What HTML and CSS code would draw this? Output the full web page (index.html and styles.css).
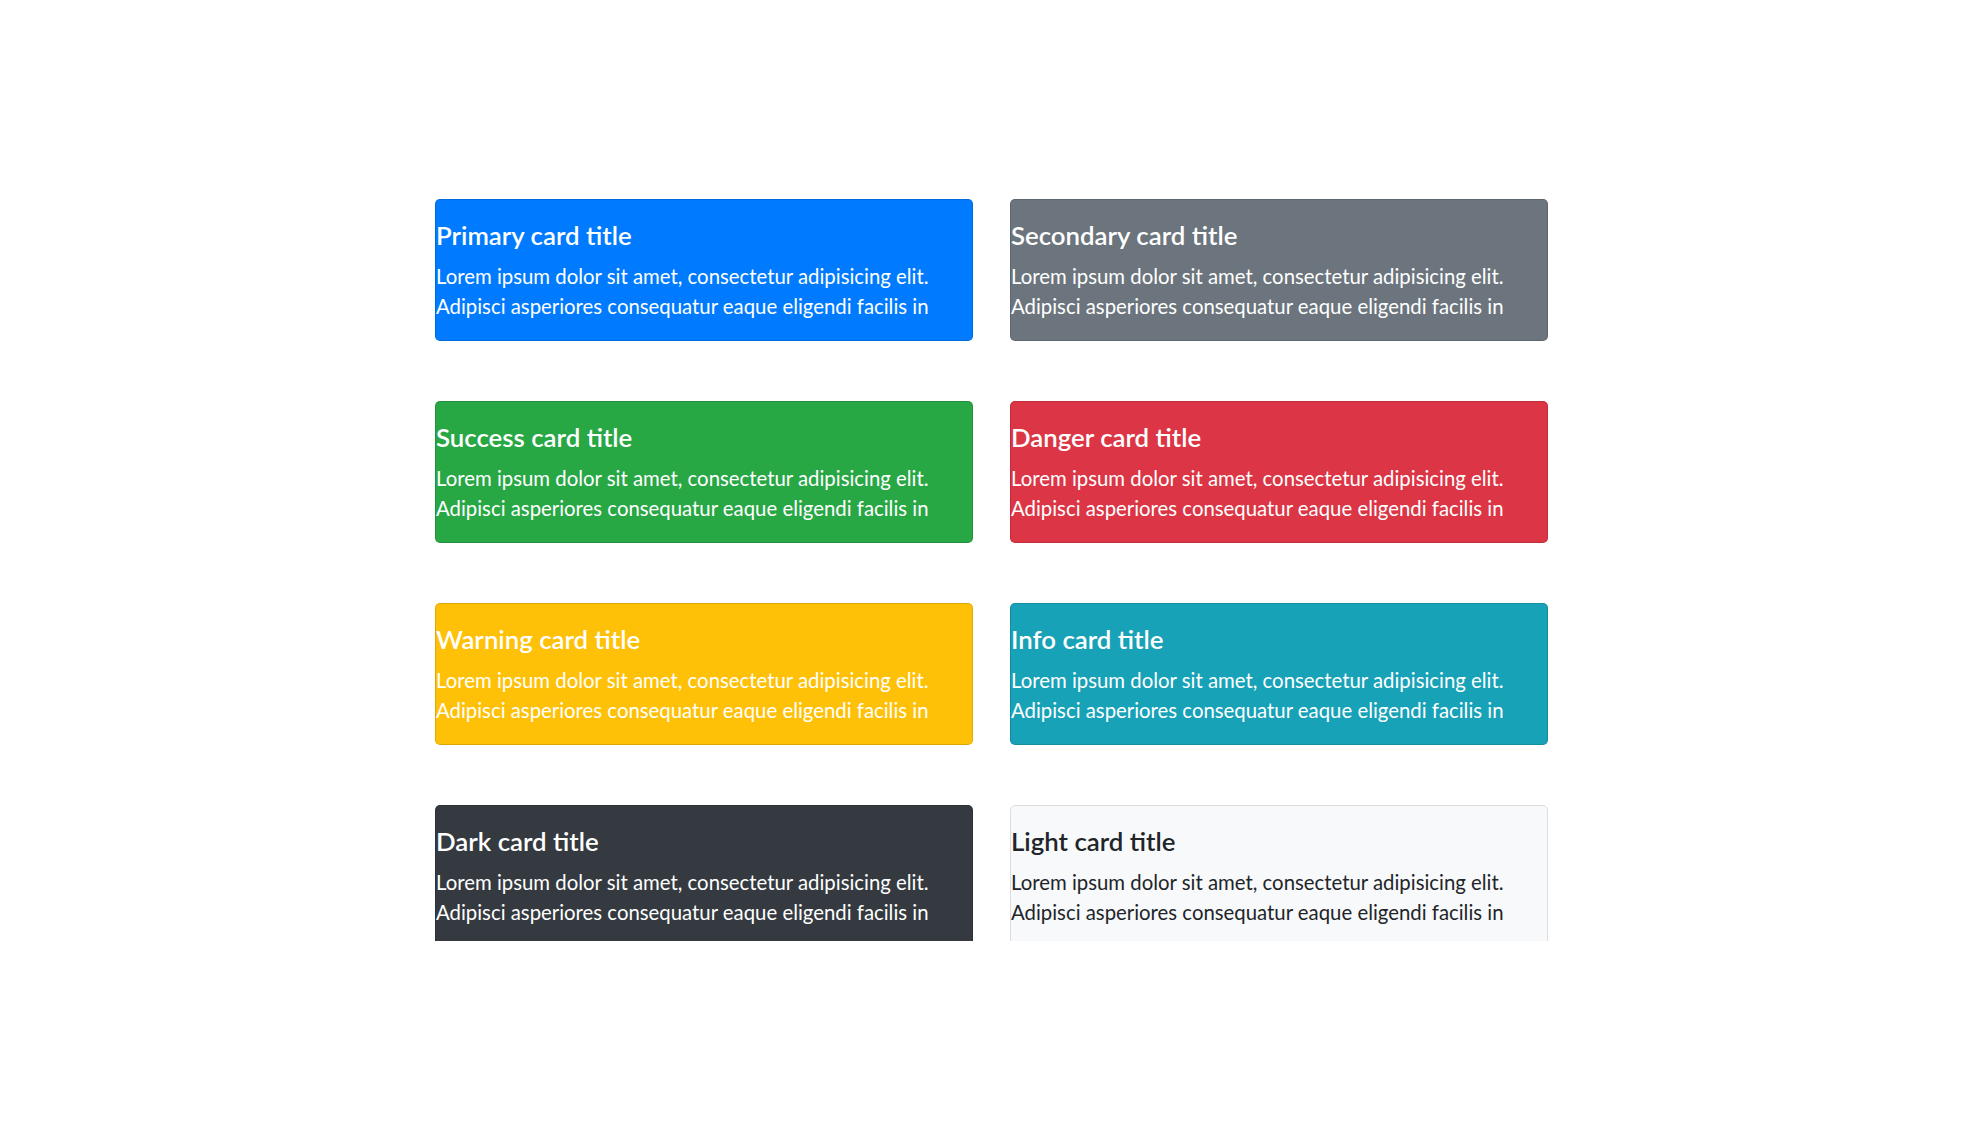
FILE: index.html
```html
<!DOCTYPE html>
<html lang="en">
<head>
<meta charset="utf-8">
<title>Cards</title>
<link rel="stylesheet" href="styles.css">
</head>
<body>
<div class="viewport">
  <div class="grid">
    <div class="card bg-primary">
      <div class="card-body">
        <h5 class="card-title">Primary card title</h5>
        <p class="card-text">Lorem ipsum dolor sit amet, consectetur adipisicing elit.<br>Adipisci asperiores consequatur eaque eligendi facilis in</p>
      </div>
    </div>
    <div class="card bg-secondary">
      <div class="card-body">
        <h5 class="card-title">Secondary card title</h5>
        <p class="card-text">Lorem ipsum dolor sit amet, consectetur adipisicing elit.<br>Adipisci asperiores consequatur eaque eligendi facilis in</p>
      </div>
    </div>
    <div class="card bg-success">
      <div class="card-body">
        <h5 class="card-title">Success card title</h5>
        <p class="card-text">Lorem ipsum dolor sit amet, consectetur adipisicing elit.<br>Adipisci asperiores consequatur eaque eligendi facilis in</p>
      </div>
    </div>
    <div class="card bg-danger">
      <div class="card-body">
        <h5 class="card-title">Danger card title</h5>
        <p class="card-text">Lorem ipsum dolor sit amet, consectetur adipisicing elit.<br>Adipisci asperiores consequatur eaque eligendi facilis in</p>
      </div>
    </div>
    <div class="card bg-warning">
      <div class="card-body">
        <h5 class="card-title">Warning card title</h5>
        <p class="card-text">Lorem ipsum dolor sit amet, consectetur adipisicing elit.<br>Adipisci asperiores consequatur eaque eligendi facilis in</p>
      </div>
    </div>
    <div class="card bg-info">
      <div class="card-body">
        <h5 class="card-title">Info card title</h5>
        <p class="card-text">Lorem ipsum dolor sit amet, consectetur adipisicing elit.<br>Adipisci asperiores consequatur eaque eligendi facilis in</p>
      </div>
    </div>
    <div class="card bg-dark">
      <div class="card-body">
        <h5 class="card-title">Dark card title</h5>
        <p class="card-text">Lorem ipsum dolor sit amet, consectetur adipisicing elit.<br>Adipisci asperiores consequatur eaque eligendi facilis in</p>
      </div>
    </div>
    <div class="card bg-light">
      <div class="card-body">
        <h5 class="card-title">Light card title</h5>
        <p class="card-text">Lorem ipsum dolor sit amet, consectetur adipisicing elit.<br>Adipisci asperiores consequatur eaque eligendi facilis in</p>
      </div>
    </div>
  </div>
</div>
</body>
</html>
```
FILE: styles.css
```css
html, body {
  margin: 0;
  padding: 0;
  background: #fff;
}
body {
  font-family: Lato, "Open Sans", "Noto Sans", sans-serif;
  font-size: 20.35px;
  line-height: 1.5;
  color: #212529;
}
.viewport {
  height: 941px;
  overflow: hidden;
  padding-top: 199px;
  box-sizing: border-box;
}
.grid {
  display: grid;
  grid-template-columns: 538px 538px;
  column-gap: 37px;
  row-gap: 60px;
  margin-left: 435px;
}
.card {
  height: 142px;
  box-sizing: border-box;
  border: 1px solid rgba(0, 0, 0, 0.125);
  border-radius: 5px;
  color: #fff;
}
.card-body {
  padding: 20px 0 0 0;
}
.card-title {
  margin: 0 0 11px 0;
  font-size: 25.8px;
  font-weight: 600;
  line-height: 30px;
}
.card-text {
  margin: 0;
  line-height: 30px;
}
.bg-primary { background: #007bff; }
.bg-secondary { background: #6c757d; }
.bg-success { background: #28a745; }
.bg-danger { background: #dc3545; }
.bg-warning { background: #ffc107; }
.bg-info { background: #17a2b8; }
.bg-dark { background: #343a40; }
.bg-light { background: #f8f9fa; color: #212529; border-color: #dcdde0; }
```
